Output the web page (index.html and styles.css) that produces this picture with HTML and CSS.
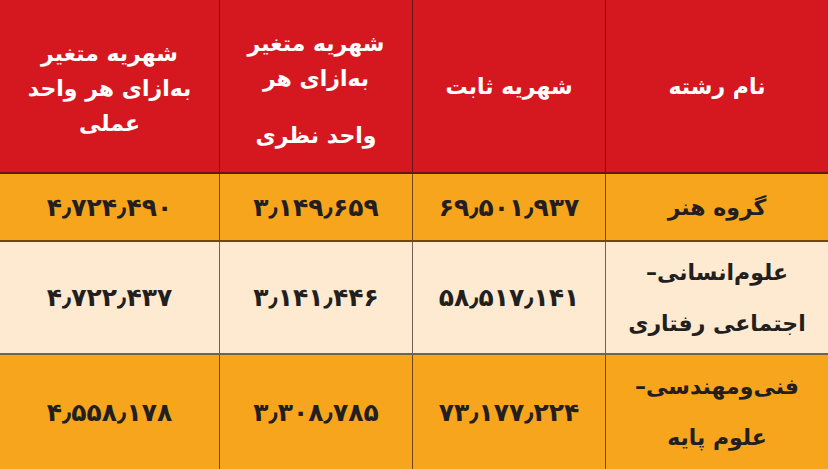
FILE: index.html
```html
<!DOCTYPE html>
<html lang="fa" dir="rtl">
<head>
<meta charset="utf-8">
<title>جدول شهریه</title>
<link rel="stylesheet" href="styles.css">
</head>
<body>
<div class="table">
  <div class="cell head"><span>نام رشته</span></div>
  <div class="cell head"><span>شهریه ثابت</span></div>
  <div class="cell head c3"><span class="ln">شهریه متغیر</span><span class="ln">به‌ازای هر</span><span class="ln gap">واحد نظری</span></div>
  <div class="cell head c4"><span class="ln">شهریه متغیر</span><span class="ln">به‌ازای هر واحد</span><span class="ln">عملی</span></div>

  <div class="cell orange name"><span>گروه هنر</span></div>
  <div class="cell orange num"><span>۶۹٫۵۰۱٫۹۳۷</span></div>
  <div class="cell orange num"><span>۳٫۱۴۹٫۶۵۹</span></div>
  <div class="cell orange num"><span>۴٫۷۲۴٫۴۹۰</span></div>

  <div class="cell cream name"><span class="ln">علوم‌انسانی–</span><span class="ln">اجتماعی رفتاری</span></div>
  <div class="cell cream num"><span>۵۸٫۵۱۷٫۱۴۱</span></div>
  <div class="cell cream num"><span>۳٫۱۴۱٫۴۴۶</span></div>
  <div class="cell cream num"><span>۴٫۷۲۲٫۴۳۷</span></div>

  <div class="cell orange name"><span class="ln">فنی‌ومهندسی–</span><span class="ln">علوم پایه</span></div>
  <div class="cell orange num"><span>۷۳٫۱۷۷٫۲۲۴</span></div>
  <div class="cell orange num"><span>۳٫۳۰۸٫۷۸۵</span></div>
  <div class="cell orange num"><span>۴٫۵۵۸٫۱۷۸</span></div>
</div>
</body>
</html>
```

FILE: styles.css
```css
html, body {
  margin: 0;
  padding: 0;
  background: #f6a51c;
}
body {
  width: 828px;
  height: 469px;
  overflow: hidden;
  font-family: "DejaVu Sans", "Noto Sans", sans-serif;
}
.table {
  display: grid;
  direction: rtl;
  grid-template-columns: 223px 193px 193px 219px;
  grid-template-rows: 174px 68px 113px 114px;
  width: 828px;
  height: 469px;
}
.cell {
  display: flex;
  flex-direction: column;
  align-items: center;
  justify-content: center;
  text-align: center;
  box-sizing: border-box;
  border-left: 1px solid rgba(45, 20, 15, 0.65);
  border-bottom: 2px solid rgba(45, 20, 15, 0.65);
}
.cell:nth-child(4n) {
  border-left: none;
}
.cell:nth-last-child(-n+4) {
  border-bottom: none;
}
.head {
  background: #d51820;
  color: #ffffff;
  font-size: 22px;
  font-weight: bold;
  line-height: 35px;
}
.c3 {
  padding-top: 6px;
}
.c3 .gap {
  margin-top: 22px;
}
.c4 {
  padding-top: 4px;
}
.ln {
  display: block;
  white-space: nowrap;
}
.orange {
  background: #f6a51c;
}
.cream {
  background: #fdead0;
}
.orange, .cream {
  color: #231f20;
  font-size: 22px;
  font-weight: bold;
}
.name {
  line-height: 51px;
}
.num {
  font-size: 25px;
}
.num span {
  direction: ltr;
  unicode-bidi: isolate;
  letter-spacing: 0.5px;
}
```
